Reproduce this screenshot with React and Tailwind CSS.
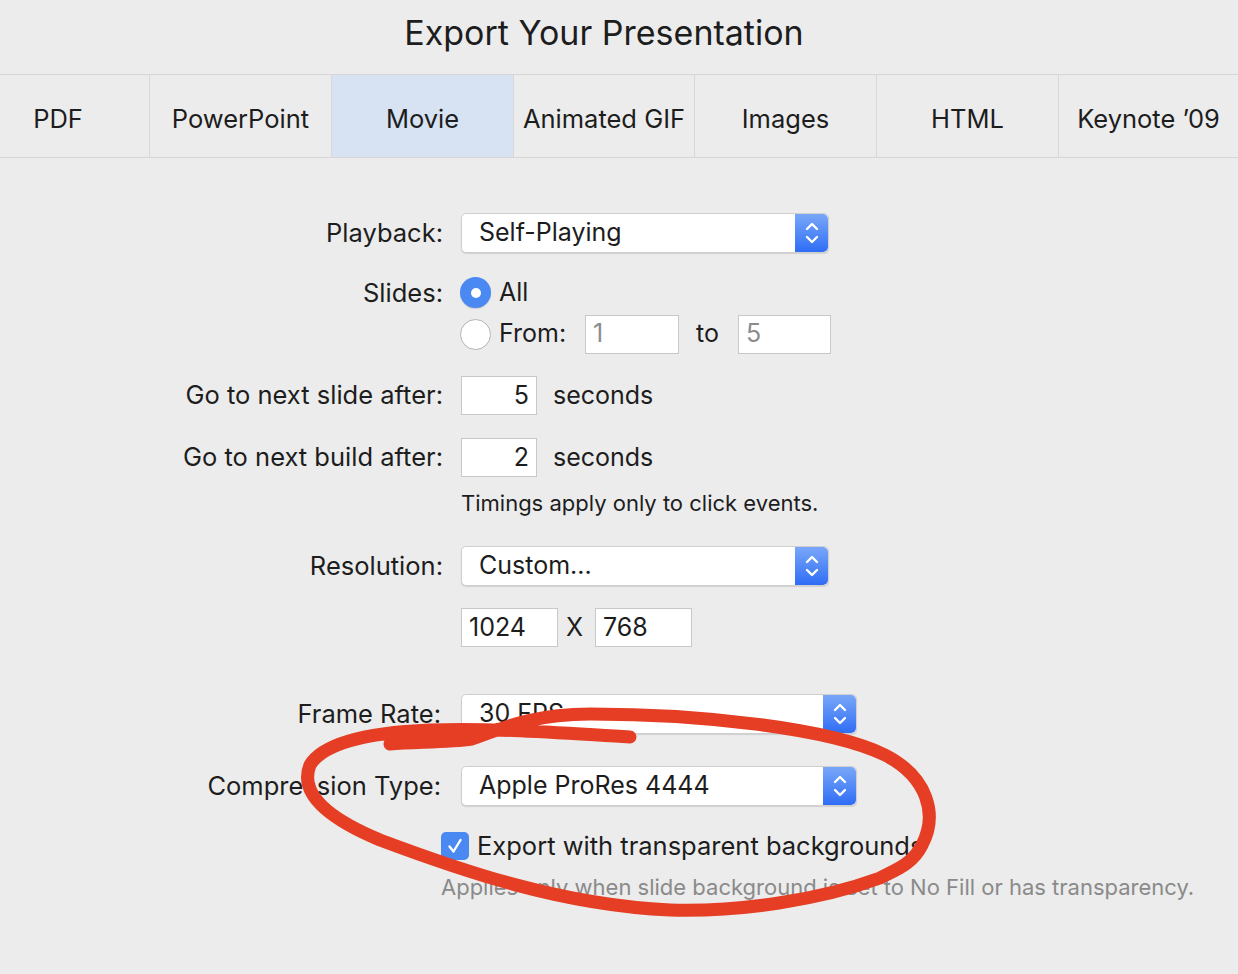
import React from "react";

const tabs = [
  { name: "PDF", w: "w-[182px] ml-[-33px]" },
  { name: "PowerPoint", w: "w-[182px]" },
  { name: "Movie", w: "w-[182px]", active: true },
  { name: "Animated GIF", w: "w-[181px]" },
  { name: "Images", w: "w-[182px]" },
  { name: "HTML", w: "w-[182px]" },
  { name: "Keynote ’09", w: "flex-1" },
];

function Stepper() {
  return (
    <div className="w-[33px] self-stretch rounded-r-[5px] bg-gradient-to-b from-[#79a6f8] to-[#2f6cf5] flex items-center justify-center">
      <svg width="16" height="26" viewBox="0 0 16 26" fill="none" stroke="white" strokeWidth="2.4" strokeLinecap="round" strokeLinejoin="round">
        <path d="M3 9 L8 4 L13 9" />
        <path d="M3 17 L8 22 L13 17" />
      </svg>
    </div>
  );
}

function Select({ value, w }) {
  return (
    <div className={`${w} h-[40px] flex bg-white rounded-[5px] border border-[#cfcfcf] shadow-[0_1px_1px_rgba(0,0,0,0.12)]`}>
      <div className="flex-1 pl-[17px] flex items-center text-[25px] text-[#1d1d1d]">{value}</div>
      <Stepper />
    </div>
  );
}

function Field({ value, w, gray, right }) {
  return (
    <div
      className={`${w} h-[39px] bg-white border border-[#c8c8c8] flex items-center px-[7px] text-[25px] ${
        gray ? "text-[#8c8c8c]" : "text-[#1d1d1d]"
      } ${right ? "justify-end" : ""}`}
    >
      {value}
    </div>
  );
}

function Label({ children, className = "" }) {
  return <div className={`w-[443px] shrink-0 text-right text-[25.5px] text-[#1d1d1d] ${className}`}>{children}</div>;
}

function Radio({ on }) {
  if (on)
    return (
      <div className="w-[31px] h-[31px] rounded-full bg-[#4a88f2] flex items-center justify-center shadow-[0_1px_1px_rgba(0,0,0,0.15)]">
        <div className="w-[10px] h-[10px] rounded-full bg-white" />
      </div>
    );
  return <div className="w-[31px] h-[31px] rounded-full bg-white border border-[#b4b4b4]" />;
}

export default function App() {
  return (
    <div className="relative w-[1238px] h-[974px] bg-[#ececec] overflow-hidden font-['Inter','Liberation_Sans',sans-serif] text-[#1d1d1d]">
      <div className="h-[74px] flex items-center justify-center pb-[10px] pr-[30px] text-[34px]">Export Your Presentation</div>

      <div className="flex h-[84px] border-y border-[#d6d6d6]">
        {tabs.map((t, i) => (
          <div
            key={t.name}
            className={`${t.w} shrink-0 flex items-center justify-center pt-[6px] text-[25.5px] ${i > 0 ? "border-l border-[#d8d8d8]" : ""} ${
              t.active ? "bg-[#d7e3f2]" : ""
            }`}
          >
            {t.name}
          </div>
        ))}
      </div>

      <div className="flex flex-col pt-[55px]">
        <div className="flex items-center gap-[18px]">
          <Label>Playback:</Label>
          <Select value="Self-Playing" w="w-[368px]" />
        </div>

        <div className="flex gap-[17px] mt-[24px]">
          <Label className="h-[31px] leading-[31px]">Slides:</Label>
          <div className="flex flex-col">
            <div className="flex items-center gap-[8px] h-[31px]">
              <Radio on />
              <span className="text-[25px]">All</span>
            </div>
            <div className="flex items-center mt-[6px] h-[40px]">
              <Radio />
              <span className="text-[25px] ml-[8px] w-[86px]">From:</span>
              <Field value="1" w="w-[94px]" gray />
              <span className="text-[25px] ml-[17px] w-[42px]">to</span>
              <Field value="5" w="w-[93px]" gray />
            </div>
          </div>
        </div>

        <div className="flex items-center gap-[18px] mt-[22px]">
          <Label>Go to next slide after:</Label>
          <Field value="5" w="w-[76px]" right />
          <span className="text-[25px] ml-[-2px]">seconds</span>
        </div>

        <div className="flex items-center gap-[18px] mt-[23px]">
          <Label>Go to next build after:</Label>
          <Field value="2" w="w-[76px]" right />
          <span className="text-[25px] ml-[-2px]">seconds</span>
        </div>

        <div className="ml-[461px] mt-[12px] text-[22px] leading-[28px]">Timings apply only to click events.</div>

        <div className="flex items-center gap-[18px] mt-[29px]">
          <Label>Resolution:</Label>
          <Select value="Custom..." w="w-[368px]" />
        </div>

        <div className="flex items-center ml-[461px] mt-[22px]">
          <Field value="1024" w="w-[97px]" />
          <span className="text-[25px] ml-[8px] mr-[12px]">X</span>
          <Field value="768" w="w-[97px]" />
        </div>

        <div className="flex items-center gap-[18px] mt-[47px]">
          <Label className="pr-[2px]">Frame Rate:</Label>
          <Select value="30 FPS" w="w-[396px]" />
        </div>

        <div className="flex items-center gap-[18px] mt-[32px]">
          <Label className="pr-[2px]">Compression Type:</Label>
          <Select value="Apple ProRes 4444" w="w-[396px]" />
        </div>

        <div className="flex items-center gap-[8px] ml-[441px] mt-[21px]">
          <div className="w-[28px] h-[28px] rounded-[5px] bg-[#4a88f2] flex items-center justify-center">
            <svg width="18" height="18" viewBox="0 0 18 18" fill="none" stroke="white" strokeWidth="2.4" strokeLinecap="round" strokeLinejoin="round">
              <path d="M3.5 9.5 L7.5 14.5 L14.5 3" />
            </svg>
          </div>
          <span className="text-[25.5px]">Export with transparent backgrounds</span>
        </div>

        <div className="ml-[441px] mt-[8px] text-[22px] leading-[28px] text-[#8a8a8a]">
          Applies only when slide background is set to No Fill or has transparency.
        </div>
      </div>

      <svg className="absolute inset-0 pointer-events-none" width="1238" height="974" viewBox="0 0 1238 974" fill="none">
        <path
          d="M390 744 C420 742 450 742 472 739 C505 727 535 714 590 714 C700 714 830 728 885 755 C928 777 938 815 922 845 C912 865 895 870 880 878 C820 900 740 912 670 910 C560 905 460 870 380 840 C320 815 300 790 310 765 C325 740 380 732 430 730 C500 728 560 733 630 737"
          stroke="#e53e24"
          strokeWidth="13"
          strokeLinecap="round"
          strokeLinejoin="round"
        />
      </svg>
    </div>
  );
}
